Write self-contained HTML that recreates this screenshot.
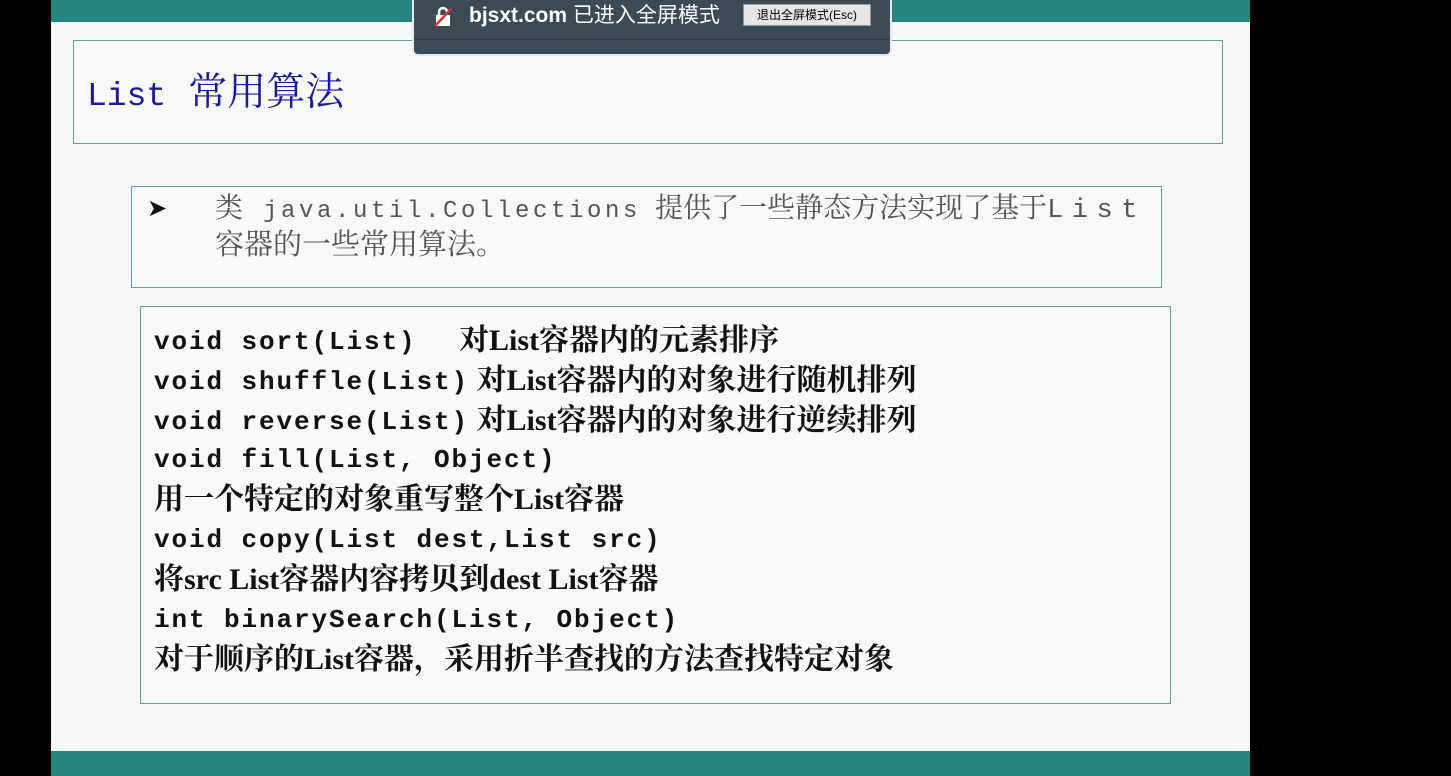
<!DOCTYPE html>
<html><head><meta charset="utf-8"><style>
body{margin:0;width:1451px;height:776px;background:#000;position:relative;overflow:hidden}
.slide{position:absolute;left:51px;top:0;width:1199px;height:776px;background:#f7f7f7}
.tbar{position:absolute;left:0;top:0;width:1199px;height:22px;background:#24857f}
.bbar{position:absolute;left:0;top:751px;width:1199px;height:25px;background:#24857f}
.box{position:absolute;border:1.5px solid #5aa59c;background:#f9f9f9}
.t{position:absolute;white-space:pre;line-height:1}
.mono{font-family:"Liberation Mono",monospace}
.cn{font-family:"Liberation Serif","Noto Serif CJK SC",serif}
.code{font-family:"Liberation Mono",monospace;font-weight:bold;font-size:26px;letter-spacing:1.9px;color:#111}
.zh{font-family:"Liberation Serif","Noto Serif CJK SC",serif;font-weight:bold;font-size:30px;color:#111;letter-spacing:0;vertical-align:-1px}
.pop{position:absolute;left:412px;top:0;width:476px;height:54px;background:#3c4a55;border:2px solid #e8e8e8;border-top:none;border-radius:0 0 6px 6px}
</style></head><body>
<div class="slide">
<div class="tbar"></div><div class="bbar"></div>
<div class="box" style="left:22px;top:40px;width:1148px;height:102px"></div>
<div class="t" style="left:36px;top:73px;color:#1a1a9c"><span class="mono" style="font-size:33px">List</span><span class="cn" style="font-size:39px;margin-left:22px">常用算法</span></div>
<div class="box" style="left:80px;top:186px;width:1029px;height:100px"></div>
<div class="t" style="left:96px;top:197px;font-size:24px;color:#111">➤</div>
<div class="t" style="left:164px;top:195px;color:#555;font-size:28px"><span class="cn">类</span><span class="mono" style="font-size:24px;letter-spacing:3.6px;margin-left:20px">java.util.Collections</span><span class="cn" style="margin-left:14px">提供了一些静态方法实现了基于</span><span class="mono" style="font-size:27px;letter-spacing:8.5px">List</span></div>
<div class="t cn" style="left:164px;top:231px;color:#555;font-size:29px">容器的一些常用算法。</div>
<div class="box" style="left:89px;top:306px;width:1029px;height:396px"></div>
<div class="t" style="left:103px;top:326px"><span class="code">void sort(List)  </span><span class="zh"> 对List容器内的元素排序</span></div>
<div class="t" style="left:103px;top:366px"><span class="code">void shuffle(List)</span><span class="zh"> 对List容器内的对象进行随机排列</span></div>
<div class="t" style="left:103px;top:406px"><span class="code">void reverse(List)</span><span class="zh"> 对List容器内的对象进行逆续排列</span></div>
<div class="t" style="left:103px;top:447px"><span class="code">void fill(List, Object)</span></div>
<div class="t zh" style="left:103px;top:485px">用一个特定的对象重写整个List容器</div>
<div class="t" style="left:103px;top:527px"><span class="code">void copy(List dest,List src)</span></div>
<div class="t zh" style="left:103px;top:565px">将src List容器内容拷贝到dest List容器</div>
<div class="t" style="left:103px;top:607px"><span class="code">int binarySearch(List, Object)</span></div>
<div class="t zh" style="left:103px;top:645px">对于顺序的List容器，采用折半查找的方法查找特定对象</div>
</div>
<div class="pop">
<svg style="position:absolute;left:18px;top:6px" width="22" height="22" viewBox="0 0 22 22"><rect x="4" y="9" width="14" height="11" fill="#fff"/><path d="M7 9V6a4 4 0 0 1 8 0" stroke="#fff" stroke-width="2.5" fill="none"/><path d="M3 20L19 3" stroke="#d33" stroke-width="2.5"/></svg>
<div class="t" style="left:55px;top:5px;color:#fff;font-family:'Liberation Sans','Noto Sans CJK SC',sans-serif;font-size:21px"><b>bjsxt.com</b> 已进入全屏模式</div>
<div class="t" style="left:329px;top:4px;width:126px;height:20px;background:#e6e6e6;border:1px solid #999;font-family:'Liberation Sans','Noto Sans CJK SC',sans-serif;font-size:12px;line-height:20px;text-align:center;color:#000">退出全屏模式(Esc)</div>
<div style="position:absolute;left:0;top:39px;width:476px;height:1px;background:#2e3a44"></div>
</div>
</body></html>
